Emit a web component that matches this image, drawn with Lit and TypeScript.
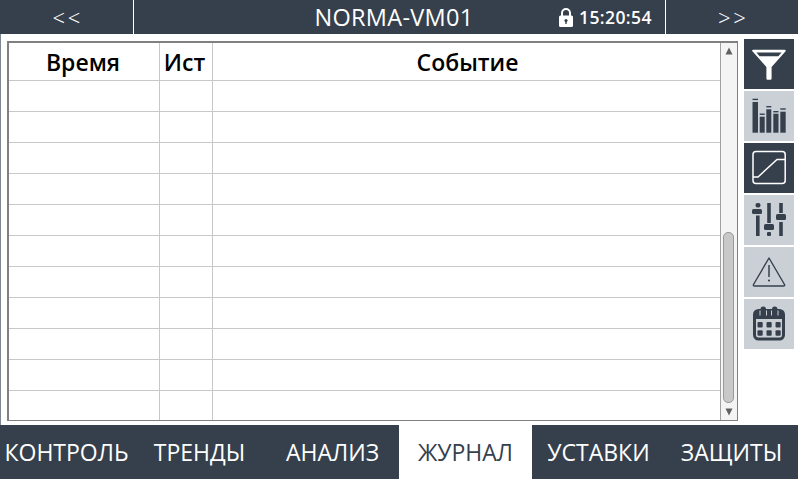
import { LitElement, html, css, svg } from "lit";
import { customElement } from "lit/decorators.js";

const FONT = css`"Open Sans", "Noto Sans", "Liberation Sans", sans-serif`;
const DARK = "#36404d";

const bars = [
  [8.5, 5.5, 7.7, 11],
  [15.7, 5, 22.5, 25.7],
  [22.3, 5, 15, 18.3],
  [29.3, 5.2, 20, 22.7],
  [36.3, 5.4, 17.3, 20.7],
];

const cells = [13.5, 22.5, 31.5].flatMap((x) => [23, 31.3].map((y) => [x, y]));

const icons = [
  {
    dark: true,
    icon: svg`
      <path d="M8 12 Q8 10.7 9.5 10.7 H40.5 Q42 10.7 41.8 12 L27.6 28 V39.5 Q27.6 40.8 26.4 40.8 H23.6 Q22.4 40.8 22.4 39.5 V28 L8.2 12 Z" fill="#fff"/>
      <path d="M12.4 13.6 H37.6 L34.4 17.3 H15.6 Z" fill="${DARK}"/>`,
  },
  {
    dark: false,
    icon: svg`<g fill="${DARK}">${bars.map(
      ([x, w, cap, top]) => svg`<rect x="${x}" y="${cap}" width="${w}" height="1.4"/><rect x="${x}" y="${top}" width="${w}" height="${41.7 - top}"/>`
    )}</g>`,
  },
  {
    dark: true,
    icon: svg`
      <rect x="9" y="8.5" width="32.2" height="32" rx="3" fill="none" stroke="#fff" stroke-width="1.5"/>
      <path d="M9 34 H14 L33 16.5 H41" fill="none" stroke="#fff" stroke-width="1.5"/>`,
  },
  {
    dark: false,
    icon: svg`<g fill="${DARK}">
      <rect x="11.5" y="8" width="5" height="4.5" rx="2"/>
      <rect x="8" y="14" width="10" height="5" rx="1.5"/>
      <rect x="12" y="20.5" width="3.6" height="20.5"/>
      <rect x="23.2" y="8" width="3.6" height="20"/>
      <rect x="20" y="29" width="10" height="6" rx="1.5"/>
      <rect x="23" y="37" width="4" height="4" rx="1"/>
      <rect x="35.2" y="8" width="3.6" height="10"/>
      <rect x="32" y="19" width="10" height="6" rx="1.5"/>
      <rect x="35.2" y="27" width="3.6" height="14"/>
    </g>`,
  },
  {
    dark: false,
    icon: svg`
      <path d="M25 11 L40.5 37.5 Q41 39 39.5 39 H10.5 Q9 39 9.5 37.5 Z" fill="none" stroke="${DARK}" stroke-width="1.4" stroke-linejoin="round"/>
      <path d="M25 18 V30" stroke="${DARK}" stroke-width="1.5"/>
      <circle cx="25" cy="33.5" r="1.1" fill="${DARK}"/>`,
  },
  {
    dark: false,
    icon: svg`
      <rect x="10.5" y="11.5" width="29" height="28.5" rx="4" fill="none" stroke="${DARK}" stroke-width="3"/>
      <path d="M10 20 V15 Q10 11 14 11 H36 Q40 11 40 15 V20 Z" fill="${DARK}"/>
      <g fill="${DARK}">
        <rect x="16.5" y="7.5" width="5.5" height="9.5" rx="2.7"/>
        <rect x="28" y="7.5" width="5.5" height="9.5" rx="2.7"/>
      </g>
      <g fill="#cbd0d7">
        <rect x="15.5" y="11.5" width="1" height="5"/>
        <rect x="22" y="11.5" width="1" height="5"/>
        <rect x="27" y="11.5" width="1" height="5"/>
        <rect x="33.5" y="11.5" width="1" height="5"/>
      </g>
      <g fill="${DARK}">${cells.map(([x, y]) => svg`<rect x="${x}" y="${y}" width="5.2" height="5.4" rx="1"/>`)}</g>`,
  },
];

const tabs: [string, boolean][] = [
  ["КОНТРОЛЬ", false],
  ["ТРЕНДЫ", false],
  ["АНАЛИЗ", false],
  ["ЖУРНАЛ", true],
  ["УСТАВКИ", false],
  ["ЗАЩИТЫ", false],
];

@customElement("app-root")
export class AppRoot extends LitElement {
  static styles = css`
    :host {
      display: flex;
      flex-direction: column;
      width: 798px;
      height: 479px;
      overflow: hidden;
      background: #fff;
      font-family: ${FONT};
    }
    .top {
      height: 34px;
      background: #36404d;
      color: #fff;
      display: grid;
      grid-template-columns: 133px 1px 531px 1px 132px;
      flex: none;
    }
    .divider { background: #fff; }
    .arrow {
      display: flex;
      align-items: center;
      justify-content: center;
      font-size: 22px;
      font-weight: 300;
      word-spacing: -3px;
    }
    .title {
      position: relative;
      display: flex;
      align-items: center;
      justify-content: center;
      font-size: 23.5px;
      letter-spacing: 0.3px;
      padding-right: 11px;
    }
    .clock {
      position: absolute;
      left: 424px;
      top: 0;
      height: 34px;
      display: flex;
      align-items: center;
      gap: 5px;
      font-size: 17.5px;
      font-weight: 600;
      letter-spacing: 0.4px;
    }
    .main {
      flex: 1;
      min-height: 0;
      display: flex;
      padding: 5px 4px 4px 6px;
      align-items: flex-start;
      border-left: 1px solid #7d8793;
    }
    .panel {
      width: 731px;
      height: 380px;
      margin-top: 2px;
      box-sizing: border-box;
      border: 2px solid #808080;
      border-right-width: 1px;
      border-bottom-width: 1px;
      display: flex;
    }
    .table {
      flex: 1;
      display: flex;
      flex-direction: column;
      overflow: hidden;
    }
    .row {
      display: grid;
      grid-template-columns: 150px 1px 52px 1px 1fr;
      height: 31px;
      flex: none;
      border-top: 1px solid #c8c8c8;
      box-sizing: border-box;
    }
    .row.head {
      height: 37px;
      border-top: none;
      color: #000;
      font-weight: 600;
      font-size: 23px;
      line-height: 38px;
      text-align: center;
    }
    .row i { background: #c8c8c8; }
    .row span { display: block; }
    .time { padding-right: 2px; }
    .src { padding-right: 3px; }
    .event { padding-left: 2px; }
    .scroll {
      width: 17px;
      flex: none;
      box-sizing: border-box;
      border-left: 1px solid #a0a0a0;
      background: #f4f4f4;
      position: relative;
      display: flex;
      flex-direction: column;
      justify-content: space-between;
    }
    .thumb {
      position: absolute;
      left: 2px;
      top: 189px;
      width: 11px;
      height: 171px;
      background: #c8c8c8;
      border: 1px solid #9a9a9a;
      border-radius: 5px;
      box-sizing: border-box;
    }
    .sb {
      display: block;
      margin: 4px auto;
    }
    .side {
      margin-left: 6px;
      display: flex;
      flex-direction: column;
      gap: 2px;
    }
    .btn {
      width: 50px;
      height: 50px;
      background: #cbd0d7;
    }
    .btn.dark { background: #36404d; }
    .btn svg { display: block; }
    .bottom {
      height: 54px;
      flex: none;
      background: #36404d;
      display: grid;
      grid-template-columns: repeat(6, 133px);
    }
    .tab {
      color: #fff;
      font-size: 23px;
      display: flex;
      align-items: center;
      justify-content: center;
      white-space: nowrap;
    }
    .tab.on { background: #fff; color: #36404d; }
  `;

  render() {
    const rows = Array.from({ length: 11 });
    return html`
      <div class="top">
        <div class="arrow">&lt; &lt;</div>
        <div class="divider"></div>
        <div class="title">NORMA-VM01
          <div class="clock">
            <svg width="16" height="21" viewBox="0 0 16 21"><path d="M4 9 V6 a4 4 0 0 1 8 0 V9" fill="none" stroke="#fff" stroke-width="2"/><rect x="1" y="8.5" width="14" height="11.5" rx="1.5" fill="#fff"/><circle cx="8" cy="13.5" r="1.6" fill="#36404d"/><rect x="7.3" y="14" width="1.4" height="3" fill="#36404d"/></svg>
            <span>15:20:54</span>
          </div>
        </div>
        <div class="divider"></div>
        <div class="arrow">&gt; &gt;</div>
      </div>
      <div class="main">
        <div class="panel">
          <div class="table">
            <div class="row head"><span class="time">Время</span><i></i><span class="src">Ист</span><i></i><span class="event">Событие</span></div>
            ${rows.map(() => html`<div class="row"><span></span><i></i><span></span><i></i><span></span></div>`)}
          </div>
          <div class="scroll">
            <svg class="sb" width="8" height="8" viewBox="0 0 8 8"><path d="M4 0.5 L7.5 7.5 H0.5 Z" fill="#606060"/></svg>
            <div class="thumb"></div>
            <svg class="sb" width="8" height="8" viewBox="0 0 8 8"><path d="M4 7.5 L7.5 0.5 H0.5 Z" fill="#606060"/></svg>
          </div>
        </div>
        <div class="side">
          ${icons.map((b) => html`<div class="btn ${b.dark ? "dark" : ""}"><svg width="50" height="50" viewBox="0 0 50 50">${b.icon}</svg></div>`)}
        </div>
      </div>
      <div class="bottom">
        ${tabs.map(([t, on]) => html`<div class="tab ${on ? "on" : ""}">${t}</div>`)}
      </div>
    `;
  }
}
